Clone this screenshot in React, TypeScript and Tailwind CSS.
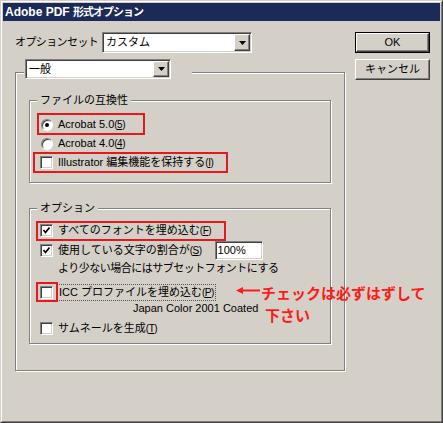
import React from 'react';

const font = { fontFamily: '"Liberation Sans", "Noto Sans CJK JP", sans-serif' };

const sunken =
    'border border-t-[#808080] border-l-[#808080] border-r-white border-b-white shadow-[inset_1px_1px_0_#404040,inset_-1px_-1px_0_#d4d0c8]';
const raised =
    'border border-t-white border-l-white border-r-[#404040] border-b-[#404040] shadow-[inset_-1px_-1px_0_#808080,inset_1px_1px_0_#d4d0c8]';
const etched = 'border border-[#808080] shadow-[1px_1px_0_#fff,inset_1px_1px_0_#fff]';

function Arrow() {
    return (
        <svg width="7" height="4" viewBox="0 0 7 4">
            <polygon points="0,0 7,0 3.5,4" fill="#000" />
        </svg>
    );
}

function Combo({ text, className }: { text: string; className: string }) {
    return (
        <div className={`flex bg-white ${sunken} ${className}`}>
            <span className="flex-1 pl-[3px] text-[11px] leading-[17px] p-[1px]">{text}</span>
            <span className={`w-[16px] m-[1px] bg-[#d4d0c8] flex items-center justify-center ${raised}`}>
                <Arrow />
            </span>
        </div>
    );
}

function Check({ checked }: { checked?: boolean }) {
    return (
        <span className={`w-[13px] h-[13px] bg-white flex items-center justify-center shrink-0 ${sunken}`}>
            {checked && (
                <svg width="9" height="9" viewBox="0 0 9 9">
                    <polyline points="1.5,4 3.5,6.5 7.5,1.5" fill="none" stroke="#000" strokeWidth="1.7" />
                </svg>
            )}
        </span>
    );
}

function Radio({ checked }: { checked?: boolean }) {
    return (
        <span className="ml-[1px] w-[12px] h-[12px] rounded-full bg-white border border-t-[#808080] border-l-[#808080] border-r-white border-b-white shadow-[inset_1px_1px_0_#404040] flex items-center justify-center shrink-0">
            {checked && <span className="w-[4px] h-[4px] rounded-full bg-black" />}
        </span>
    );
}

function RedBox({ className }: { className: string }) {
    return <span className={`absolute border-2 border-[#e3191e] pointer-events-none ${className}`} />;
}

function Key({ k }: { k: string }) {
    return (
        <span className="text-[10px] tracking-[-0.5px]">
            (<span className="underline">{k}</span>)
        </span>
    );
}

function Group({ label, className, children }: { label: string; className: string; children: React.ReactNode }) {
    return (
        <div className={`relative ${etched} ${className}`}>
            <span className="absolute left-[7px] -top-[9px] px-[3px] bg-[#d4d0c8] text-[11px] leading-[16px]">{label}</span>
            {children}
        </div>
    );
}

export default function App() {
    return (
        <div
            style={font}
            className="w-[443px] h-[423px] bg-[#d4d0c8] border border-t-[#d4d0c8] border-l-[#d4d0c8] border-r-[#404040] border-b-[#404040] text-black"
        >
            <div className="relative h-full border border-t-white border-l-white border-r-[#808080] border-b-[#808080] p-[1px]">
                <div className="h-[18px] bg-[#1c2a58] text-white text-[12px] font-bold leading-[18px] pl-[2px]">
                    Adobe PDF <span className="text-[11px] tracking-[-1px]">形式オプション</span>
                </div>

                <div className="flex gap-[10px] pl-[12px] pt-[11px]">
                    <div className="w-[330px]">
                        <div className="flex items-center h-[21px]">
                            <span className="w-[87px] text-[11px] tracking-[-0.6px] leading-[21px]">オプションセット</span>
                            <Combo text="カスタム" className="w-[150px] h-[21px]" />
                        </div>

                        <div className={`relative mt-[19px] pl-[13px] pr-[13px] pt-[27px] pb-[26px] ${etched}`}>
                            <div className="absolute left-[8px] -top-[14px] pl-[1px] pr-[21px] bg-[#d4d0c8]">
                                <Combo text="一般" className="w-[146px] h-[20px]" />
                            </div>

                            <Group label="ファイルの互換性" className="pl-[10px] pt-[14px] pb-[10px]">
                                <div className="relative flex items-center h-[19px] gap-[5px]">
                                    <Radio checked />
                                    <span className="text-[11px]">
                                        Acrobat 5.0<Key k="5" />
                                    </span>
                                    <RedBox className="-left-[3px] -top-[2px] w-[108px] h-[22px]" />
                                </div>
                                <div className="flex items-center h-[19px] gap-[5px]">
                                    <Radio />
                                    <span className="text-[11px]">
                                        Acrobat 4.0<Key k="4" />
                                    </span>
                                </div>
                                <div className="relative flex items-center h-[19px] gap-[5px]">
                                    <Check />
                                    <span className="text-[11px]">
                                        Illustrator 編集機能を保持する<Key k="I" />
                                    </span>
                                    <RedBox className="-left-[7px] -top-[1px] w-[195px] h-[21px]" />
                                </div>
                            </Group>

                            <Group label="オプション" className="mt-[25px] pl-[10px] pt-[12px] pb-[5px]">
                                <div className="relative flex items-center h-[19px] gap-[5px]">
                                    <Check checked />
                                    <span className="text-[11px]">
                                        すべてのフォントを埋め込む<Key k="F" />
                                    </span>
                                    <RedBox className="-left-[4px] top-0 w-[190px] h-[20px]" />
                                </div>
                                <div className="flex items-center h-[21px] gap-[5px]">
                                    <Check checked />
                                    <span className="text-[11px]">
                                        使用している文字の割合が<Key k="S" />
                                    </span>
                                    <span className={`ml-[8px] w-[48px] h-[19px] bg-white text-[11px] leading-[15px] pl-[2px] pt-[1px] ${sunken}`}>
                                        100%
                                    </span>
                                </div>
                                <div className="h-[14px] pl-[18px] text-[11px] tracking-[-0.5px] leading-[14px]">
                                    より少ない場合にはサブセットフォントにする
                                </div>
                                <div className="relative flex items-center h-[20px] mt-[7px]">
                                    <Check />
                                    <span className="ml-[4px] h-[17px] px-[1px] border border-dotted border-[#555] text-[11px] leading-[15px]">
                                        ICC プロファイルを埋め込む<Key k="P" />
                                    </span>
                                    <RedBox className="-left-[4px] top-0 w-[22px] h-[20px]" />
                                </div>
                                <div className="h-[12px] pl-[93px] text-[11px] leading-[12px]">Japan Color 2001 Coated</div>
                                <div className="flex items-center h-[19px] mt-[5px] gap-[5px]">
                                    <Check />
                                    <span className="text-[11px]">
                                        サムネールを生成<Key k="T" />
                                    </span>
                                </div>
                            </Group>
                        </div>
                    </div>

                    <div className="flex flex-col gap-[6px] w-[75px]">
                        <button className="h-[21px] border border-black bg-[#d4d0c8] flex">
                            <span className={`flex-1 flex items-center justify-center text-[11px] ${raised}`}>OK</span>
                        </button>
                        <button className={`h-[21px] bg-[#d4d0c8] text-[11px] ${raised}`}>キャンセル</button>
                    </div>
                </div>

                <svg className="absolute left-[234px] top-[284px]" width="25" height="9" viewBox="0 0 25 9">
                    <polygon points="0,4.5 7,1 7,8" fill="#ff1a1a" />
                    <line x1="6" y1="4.5" x2="24" y2="4.5" stroke="#ff1a1a" strokeWidth="2" />
                </svg>
                <div className="absolute left-[259px] top-[281px] text-[15px] font-bold leading-[22px] text-[#ff1a1a]">
                    <div>チェックは必ずはずして</div>
                    <div className="pl-[4px]">下さい</div>
                </div>
            </div>
        </div>
    );
}
